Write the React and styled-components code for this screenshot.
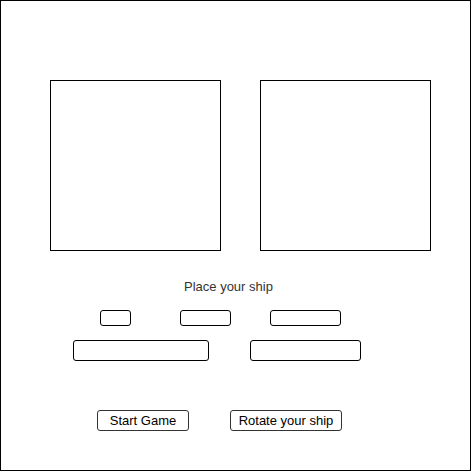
import React from 'react';
import styled, { createGlobalStyle } from 'styled-components';

const GlobalStyle = createGlobalStyle`
    html, body {
        margin: 0;
        padding: 0;
        background: #fff;
    }
    body {
        font-family: "Liberation Sans", Arial, sans-serif;
    }
`;

const Frame = styled.div`
    width: 471px;
    height: 471px;
    box-sizing: border-box;
    border: 1px solid #000;
    display: flex;
    flex-direction: column;
    padding-top: 79px;
`;

const BoardRow = styled.div`
    display: flex;
    gap: 39px;
    padding-left: 49px;
`;

const Board = styled.div`
    width: 171px;
    height: 171px;
    box-sizing: border-box;
    border: 1px solid #000;
`;

const Prompt = styled.div`
    margin-top: 28px;
    padding-left: 183px;
    font-size: 13px;
    line-height: 15px;
    color: #333;
`;

const Row = styled.div`
    display: flex;
    margin-top: ${p => p.top}px;
`;

const Ship = styled.div`
    width: ${p => p.w}px;
    height: ${p => p.h}px;
    margin-left: ${p => p.left}px;
    box-sizing: border-box;
    border: 1px solid #000;
    border-radius: 3px;
`;

const Button = styled.button`
    width: ${p => p.w}px;
    height: 21px;
    margin-left: ${p => p.left}px;
    box-sizing: border-box;
    border: 1px solid #333;
    border-radius: 3px;
    background: #fff;
    font-family: "Liberation Sans", Arial, sans-serif;
    font-size: 13px;
    color: #000;
    padding: 0;
    cursor: pointer;
`;

const App = () => {
    return (
        <>
            <GlobalStyle />
            <Frame>
                <BoardRow>
                    <Board />
                    <Board />
                </BoardRow>
                <Prompt>Place your ship</Prompt>
                <Row top={16}>
                    <Ship w={31} h={16} left={99} />
                    <Ship w={51} h={16} left={49} />
                    <Ship w={71} h={16} left={39} />
                </Row>
                <Row top={14}>
                    <Ship w={136} h={21} left={72} />
                    <Ship w={111} h={21} left={41} />
                </Row>
                <Row top={49}>
                    <Button w={92} left={96}>Start Game</Button>
                    <Button w={112} left={41}>Rotate your ship</Button>
                </Row>
            </Frame>
        </>
    );
};

export default App;
